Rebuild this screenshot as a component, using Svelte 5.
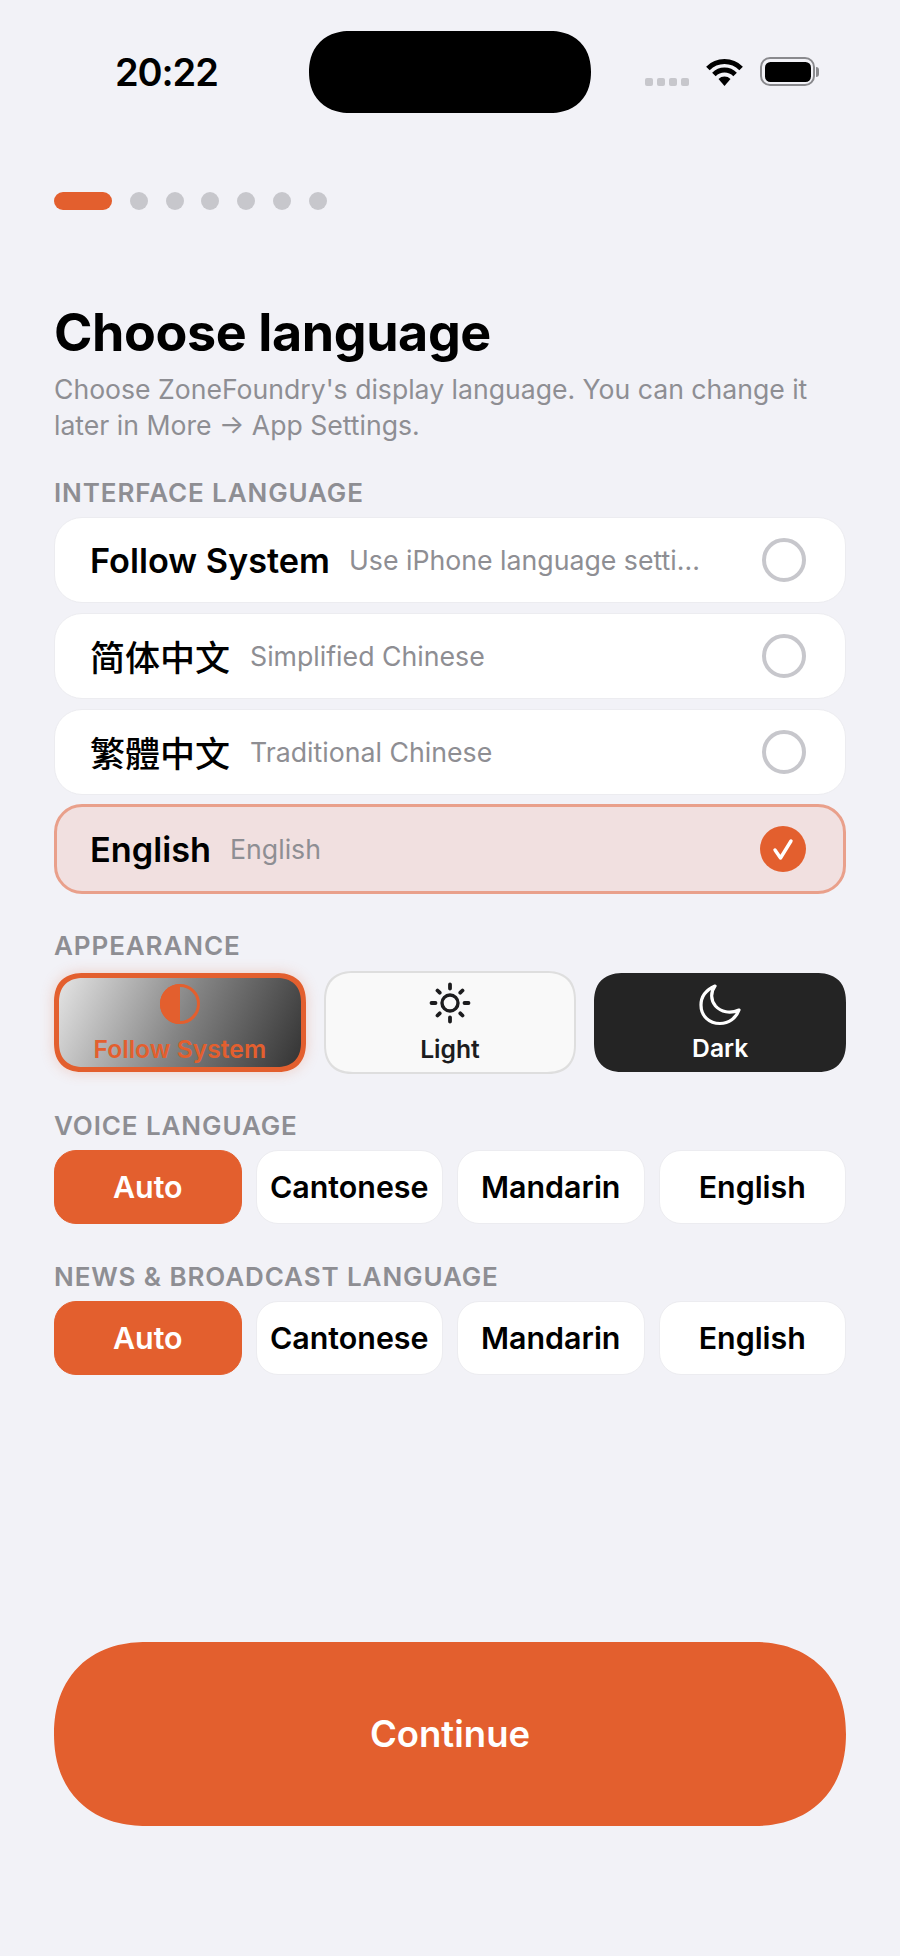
<script>
  const steps = [1, 2, 3, 4, 5, 6];
  const langs = [
    { id: 'system', name: 'Follow System', desc: 'Use iPhone language setti...' },
    { id: 'sc', name: '简体中文', desc: 'Simplified Chinese', cjk: 'sc' },
    { id: 'tc', name: '繁體中文', desc: 'Traditional Chinese', cjk: 'tc' },
    { id: 'en', name: 'English', desc: 'English', selected: true }
  ];
  const options = ['Auto', 'Cantonese', 'Mandarin', 'English'];
</script>

<div class="page">
  <header class="status">
    <span class="time">20:22</span>
    <div class="island"></div>
    <div class="indicators">
      <div class="signal"><i></i><i></i><i></i><i></i></div>
      <svg class="wifi" width="37" height="28" viewBox="0 0 37 28" aria-hidden="true">
        <path d="M1.9 10.4A23.5 23.5 0 0 1 35.1 10.4" fill="none" stroke="#000" stroke-width="5" />
        <path d="M7.9 16.4A15 15 0 0 1 29.1 16.4" fill="none" stroke="#000" stroke-width="5" />
        <path d="M12.5 21L18.5 28L24.5 21A8.5 8.5 0 0 0 12.5 21Z" fill="#000" />
      </svg>
      <div class="battery"><div class="cell"></div><div class="nub"></div></div>
    </div>
  </header>

  <div class="progress">
    <span class="pill"></span>
    {#each steps as s (s)}<span class="dot"></span>{/each}
  </div>

  <h1>Choose language</h1>
  <p class="sub">Choose ZoneFoundry's display language. You can change it later in More → App Settings.</p>

  <h2 class="label first">INTERFACE LANGUAGE</h2>
  <div class="rows">
    {#each langs as l (l.id)}
      <div class="row" class:selected={l.selected}>
        <span class="name" class:sc={l.cjk === 'sc'} class:tc={l.cjk === 'tc'}>{l.name}</span>
        <span class="desc">{l.desc}</span>
        {#if l.selected}
          <span class="check">
            <svg width="46" height="46" viewBox="0 0 46 46" aria-hidden="true">
              <path d="M15 24L20.5 32L31 15" fill="none" stroke="#fff" stroke-width="3.4" stroke-linecap="round" stroke-linejoin="round" />
            </svg>
          </span>
        {:else}
          <span class="radio"></span>
        {/if}
      </div>
    {/each}
  </div>

  <h2 class="label appearance">APPEARANCE</h2>
  <div class="tiles">
    <div class="tile follow">
      <svg width="42" height="42" viewBox="0 0 42 42" aria-hidden="true">
        <circle cx="21" cy="21" r="18.5" fill="none" stroke="#e35f2e" stroke-width="3" />
        <path d="M21 1A20 20 0 0 0 21 41Z" fill="#e35f2e" />
      </svg>
      <span>Follow System</span>
    </div>
    <div class="tile light">
      <svg width="44" height="44" viewBox="0 0 44 44" aria-hidden="true">
        <circle cx="22" cy="22" r="8" fill="none" stroke="#1c1c1e" stroke-width="3.4" />
        <g stroke="#1c1c1e" stroke-width="3.8" stroke-linecap="round">
          <path d="M22 3.5V7.5M22 36.5V40.5M3.5 22H7.5M36.5 22H40.5" />
          <path d="M9.5 9.5L11.7 11.7M32.3 32.3L34.5 34.5M9.5 34.5L11.7 32.3M32.3 11.7L34.5 9.5" />
        </g>
      </svg>
      <span>Light</span>
    </div>
    <div class="tile dark">
      <svg width="44" height="44" viewBox="0 0 44 44" aria-hidden="true">
        <path d="M17 3C8 7 3 14 3 22C3 33 11 40.5 22 40.5C31 40.5 38 35 41 27C32 31 23 29 17.5 23C12.5 17 12.5 9 17 3Z" fill="none" stroke="#fff" stroke-width="3.2" stroke-linejoin="round" />
      </svg>
      <span>Dark</span>
    </div>
  </div>

  <h2 class="label voice">VOICE LANGUAGE</h2>
  <div class="segments">
    {#each options as o, i (o)}
      <div class="segment" class:active={i === 0}>{o}</div>
    {/each}
  </div>

  <h2 class="label news">NEWS &amp; BROADCAST LANGUAGE</h2>
  <div class="segments">
    {#each options as o, i (o)}
      <div class="segment" class:active={i === 0}>{o}</div>
    {/each}
  </div>

  <button class="continue">Continue</button>
</div>

<style>
  :global(body) {
    margin: 0;
    background: #f2f2f7;
  }
  .page {
    box-sizing: border-box;
    width: 900px;
    height: 1956px;
    padding: 31px 54px 0;
    background: #f2f2f7;
    color: #000;
    font-family: Inter, "Noto Sans CJK SC", sans-serif;
    overflow: hidden;
  }
  .status {
    display: flex;
    height: 82px;
    align-items: center;
  }
  .time {
    width: 194px;
    margin-left: 61px;
    font-size: 38px;
    font-weight: 600;
    line-height: 84px;
    letter-spacing: -1.1px;
  }
  .island {
    width: 282px;
    height: 82px;
    border-radius: 41px;
    background: #000;
    corner-shape: superellipse(1.15);
  }
  .indicators {
    display: flex;
    align-items: flex-end;
    height: 29px;
    margin-left: 54px;
    margin-top: -1px;
  }
  .signal {
    display: flex;
    gap: 4px;
  }
  .signal i {
    display: block;
    width: 8px;
    height: 8px;
    border-radius: 2px;
    background: #c7c7cc;
  }
  .wifi {
    margin-left: 17px;
  }
  .battery {
    display: flex;
    align-items: center;
    height: 29px;
    margin-left: 17px;
  }
  .cell {
    box-sizing: border-box;
    width: 55px;
    height: 29px;
    padding: 2.5px;
    border: 2.5px solid #8a8a8e;
    border-radius: 10px;
    background: #000;
    background-clip: content-box;
  }
  .nub {
    width: 3px;
    height: 10px;
    margin-left: 1px;
    border-radius: 0 3px 3px 0;
    background: #8a8a8e;
  }
  .progress {
    display: flex;
    gap: 17.8px;
    margin-top: 79px;
  }
  .pill {
    width: 58px;
    height: 18px;
    border-radius: 9px;
    background: #e35f2e;
  }
  .dot {
    width: 18px;
    height: 18px;
    border-radius: 50%;
    background: #c7c7cc;
  }
  h1 {
    margin: 92px 0 0;
    font-size: 52px;
    font-weight: 700;
    line-height: 62px;
    letter-spacing: -0.4px;
  }
  .sub {
    width: 792px;
    margin: 7px 0 0;
    font-size: 26.6px;
    line-height: 36px;
    color: #8e8e93;
  }
  .label {
    margin: 0;
    font-size: 26px;
    font-weight: 600;
    line-height: 30px;
    letter-spacing: 0.9px;
    color: #8e8e93;
  }
  .first {
    margin-top: 35px;
    margin-bottom: 9px;
  }
  .rows {
    display: flex;
    flex-direction: column;
    gap: 9.8px;
  }
  .row {
    box-sizing: border-box;
    display: flex;
    align-items: center;
    height: 86px;
    padding: 0 39px 0 35px;
    background: #fff;
    border: 1px solid #ececf0;
    border-radius: 28px;
  }
  .row.selected {
    height: 90px;
    padding: 0 37px 0 33px;
    background: #f1e0e0;
    border: 3px solid #e9a08b;
  }
  .name {
    font-size: 34.3px;
    font-weight: 600;
    white-space: nowrap;
  }
  .sc,
  .tc {
    font-size: 35px;
    font-weight: 500;
  }
  .sc {
    font-family: Inter, "Noto Sans CJK SC", sans-serif;
  }
  .tc {
    font-family: Inter, "Noto Sans CJK TC", sans-serif;
  }
  .desc {
    flex: 1;
    margin-left: 19px;
    font-size: 26.7px;
    color: #8e8e93;
    white-space: nowrap;
  }
  .sc + .desc,
  .tc + .desc {
    margin-left: 20px;
  }
  .radio {
    box-sizing: border-box;
    width: 44px;
    height: 44px;
    border: 4px solid #c7c7cc;
    border-radius: 50%;
  }
  .check {
    display: flex;
    width: 46px;
    height: 46px;
    border-radius: 50%;
    background: #e35f2e;
  }
  .appearance {
    margin-top: 37px;
    margin-bottom: 12px;
  }
  .tiles {
    display: grid;
    grid-template-columns: repeat(3, 1fr);
    gap: 18.6px;
  }
  .tile {
    box-sizing: border-box;
    display: flex;
    flex-direction: column;
    align-items: center;
    height: 99px;
    padding-top: 10px;
    border-radius: 30px;
    font-size: 24.7px;
    font-weight: 600;
    line-height: 30px;
    corner-shape: superellipse(1.3);
  }
  .follow {
    padding-top: 4px;
    border: 5px solid #e35f2e;
    background: linear-gradient(115deg, #e4e4e4, #858585 50%, #333);
    color: #e35f2e;
    box-shadow: 0 0 14px rgba(227, 95, 46, 0.25);
  }
  .follow svg {
    height: 44px;
    margin-bottom: 8px;
  }
  .light {
    height: 103px;
    margin: -2px 0;
    padding-top: 8px;
    border: 2px solid #dedede;
    background: #f9f9f9;
    color: #1c1c1e;
  }
  .light svg {
    margin-bottom: 9px;
  }
  .dark {
    background: #242424;
    color: #fff;
  }
  .dark svg {
    margin-bottom: 6px;
  }
  .voice {
    margin-top: 39px;
    margin-bottom: 9px;
  }
  .news {
    margin-top: 38px;
    margin-bottom: 9px;
  }
  .segments {
    display: grid;
    grid-template-columns: repeat(4, 1fr);
    gap: 14px;
  }
  .segment {
    box-sizing: border-box;
    display: flex;
    align-items: center;
    justify-content: center;
    height: 74px;
    background: #fff;
    border: 1px solid #ececf0;
    border-radius: 22px;
    font-size: 30.4px;
    font-weight: 600;
  }
  .segment.active {
    background: #e35f2e;
    border-color: #e35f2e;
    color: #fff;
  }
  .continue {
    display: block;
    box-sizing: border-box;
    width: 792px;
    height: 184px;
    margin-top: 267px;
    border: 0;
    border-radius: 92px;
    background: #e35f2e;
    color: #fff;
    font-family: inherit;
    font-size: 36.5px;
    font-weight: 600;
    corner-shape: superellipse(1.15);
  }
</style>
